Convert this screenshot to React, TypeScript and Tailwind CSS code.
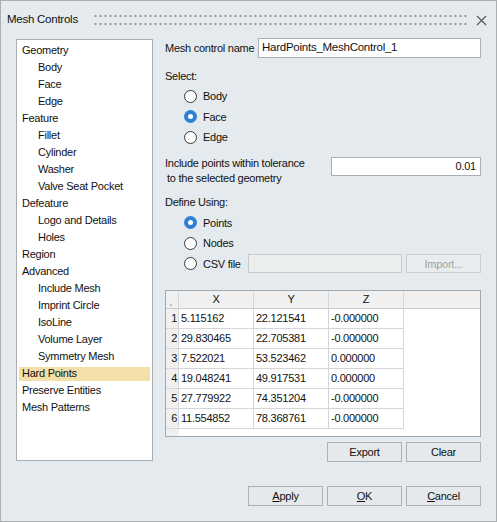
import React from 'react';

/**
 * Mesh Controls dialog
 * - left: tree of control types
 * - right: Hard Points form with point table
 */

const tree: { label: string; child?: boolean; selected?: boolean }[] = [
  { label: 'Geometry' },
  { label: 'Body', child: true },
  { label: 'Face', child: true },
  { label: 'Edge', child: true },
  { label: 'Feature' },
  { label: 'Fillet', child: true },
  { label: 'Cylinder', child: true },
  { label: 'Washer', child: true },
  { label: 'Valve Seat Pocket', child: true },
  { label: 'Defeature' },
  { label: 'Logo and Details', child: true },
  { label: 'Holes', child: true },
  { label: 'Region' },
  { label: 'Advanced' },
  { label: 'Include Mesh', child: true },
  { label: 'Imprint Circle', child: true },
  { label: 'IsoLine', child: true },
  { label: 'Volume Layer', child: true },
  { label: 'Symmetry Mesh', child: true },
  { label: 'Hard Points', selected: true },
  { label: 'Preserve Entities' },
  { label: 'Mesh Patterns' },
];

const points = [
  ['5.115162', '22.121541', '-0.000000'],
  ['29.830465', '22.705381', '-0.000000'],
  ['7.522021', '53.523462', '0.000000'],
  ['19.048241', '49.917531', '0.000000'],
  ['27.779922', '74.351204', '-0.000000'],
  ['11.554852', '78.368761', '-0.000000'],
];

function Radio({ label, checked }: { label: string; checked?: boolean }) {
  return (
    <div className="flex items-center h-[20.5px] pl-[19px] shrink-0 whitespace-nowrap">
      {checked ? (
        <span className="w-[13px] h-[13px] rounded-full bg-[#2f7fd6] flex items-center justify-center">
          <span className="w-[5px] h-[5px] rounded-full bg-white" />
        </span>
      ) : (
        <span className="w-[13px] h-[13px] rounded-full bg-white border border-[#3a3a3a]" />
      )}
      <span className="ml-[6px]">{label}</span>
    </div>
  );
}

function Button({ children, disabled }: { children: React.ReactNode; disabled?: boolean }) {
  return (
    <div
      className={
        disabled
          ? 'w-[75px] h-[19px] flex items-center justify-center border border-[#cbcfd2] bg-[#e8ecee] text-[#a2a2a2]'
          : 'w-[75px] h-[20px] flex items-center justify-center border border-[#adb1b4] bg-[#e6e9eb]'
      }
    >
      {children}
    </div>
  );
}

export default function App() {
  return (
    <div className="w-[497px] h-[522px] border border-[#a9afb3] bg-[#e4eaee] text-[11px] tracking-[-0.25px] text-[#111] font-['Liberation_Sans',Arial,sans-serif] flex flex-col select-none">
      {/* 제목줄 */}
      <div className="h-[37px] flex items-center pl-[6px] pr-[8px] pt-[1px]">
        <span className="text-[11.5px]">Mesh Controls</span>
        <div className="flex-1 ml-[15px] mr-[8px] h-[10px] flex flex-col justify-between">
          <div className="h-[2px] bg-[radial-gradient(circle,#8d9296_1px,transparent_1.2px)] bg-[length:5px_2px]" />
          <div className="h-[2px] bg-[radial-gradient(circle,#8d9296_1px,transparent_1.2px)] bg-[length:5px_2px]" />
        </div>
        <svg width="11" height="11" viewBox="0 0 11 11" className="mr-[1px]">
          <path d="M1 1L10 10M10 1L1 10" stroke="#555" strokeWidth="1.1" />
        </svg>
      </div>

      <div className="flex pl-[15px] pr-[15px] gap-[12px]">
        {/* 왼쪽: 트리 */}
        <div className="w-[137px] h-[422px] mt-[1px] bg-white border border-[#a9adb0] pt-[2px] px-[2px]">
          {tree.map((t) => (
            <div key={t.label} className="h-[17px] flex items-center">
              <div
                className={
                  'w-full h-[14px] flex items-center ' +
                  (t.child ? 'pl-[19px] ' : 'pl-[3px] ') +
                  (t.selected ? 'bg-[#f2dfa9]' : '')
                }
              >
                {t.label}
              </div>
            </div>
          ))}
        </div>

        {/* 오른쪽: 폼 */}
        <div className="flex-1 flex flex-col">
          <div className="flex items-center h-[20px]">
            <span className="w-[93px]">Mesh control name</span>
            <div className="flex-1 h-[20px] bg-white border border-[#abafb2] flex items-center px-[3px] text-[11.5px]">
              HardPoints_MeshControl_1
            </div>
          </div>

          <div className="mt-[11px] h-[14px] flex items-center">Select:</div>
          <div className="mt-[3px]">
            <Radio label="Body" />
            <Radio label="Face" checked />
            <Radio label="Edge" />
          </div>

          <div className="mt-[8px] flex items-start">
            <div className="flex flex-col leading-[15px]">
              <span>Include points within tolerance</span>
              <span className="pl-[2px]">to the selected geometry</span>
            </div>
            <div className="ml-auto mt-[1px] w-[150px] h-[19px] bg-white border border-[#abafb2] flex items-center justify-end px-[4px]">
              0.01
            </div>
          </div>

          <div className="mt-[10px] h-[14px] flex items-center">Define Using:</div>
          <div className="mt-[3px]">
            <Radio label="Points" checked />
            <Radio label="Nodes" />
            <div className="flex items-center">
              <Radio label="CSV file" />
              <div className="ml-auto w-[154px] h-[19px] bg-[#ebeeef] border border-[#c7cbce]" />
              <div className="ml-[4px]">
                <Button disabled>Import...</Button>
              </div>
            </div>
          </div>

          {/* 점 테이블 */}
          <div className="mt-[16px] h-[147px] border border-[#a5a9ac] bg-white flex flex-col">
            <div className="flex h-[18px] bg-[#f0f0f0] border-b border-[#c9cccf]">
              <div className="w-[13px] border-r border-[#d4d6d8] flex items-end justify-start pl-[3px] pb-[2px]">
                <span className="block w-0 h-0 border-l-[3px] border-l-transparent border-b-[3px] border-b-[#b8b8b8]" />
              </div>
              {['X', 'Y', 'Z'].map((h) => (
                <div key={h} className="w-[75px] border-r border-[#d4d6d8] flex items-center justify-center">
                  {h}
                </div>
              ))}
            </div>
            {points.map((row, i) => (
              <div key={i} className="flex h-[20px]">
                <div className="w-[13px] bg-[#f0f0f0] border-r border-b border-[#d4d6d8] flex items-center justify-end pr-[1px]">
                  {i + 1}
                </div>
                {row.map((v, j) => (
                  <div key={j} className="w-[75px] border-r border-b border-[#d4d6d8] flex items-center pl-[2px]">
                    {v}
                  </div>
                ))}
              </div>
            ))}
            <div className="flex-1 flex">
              <div className="w-[13px] bg-[#f0f0f0]" />
            </div>
          </div>

          <div className="mt-[5px] flex justify-end gap-[4px]">
            <Button>Export</Button>
            <Button>Clear</Button>
          </div>
        </div>
      </div>

      {/* 하단 버튼 */}
      <div className="mt-auto mb-[15px] flex justify-end gap-[4px] pr-[15px]">
        <Button>
          <span><u>A</u>pply</span>
        </Button>
        <Button>
          <span><u>O</u>K</span>
        </Button>
        <Button>
          <span><u>C</u>ancel</span>
        </Button>
      </div>
    </div>
  );
}
